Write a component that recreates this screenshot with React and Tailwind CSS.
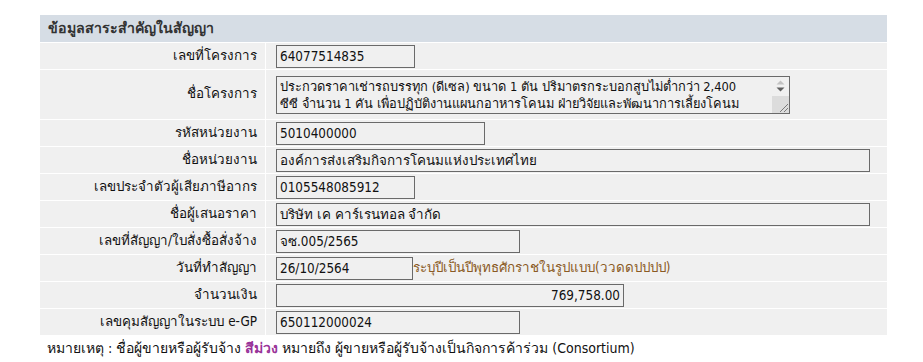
import React from 'react';

const rows = [
  { label: 'เลขที่โครงการ', value: '64077514835', w: 'w-[139px]' },
  { label: 'ชื่อโครงการ', textarea: true },
  { label: 'รหัสหน่วยงาน', value: '5010400000', w: 'w-[209px]' },
  { label: 'ชื่อหน่วยงาน', value: 'องค์การส่งเสริมกิจการโคนมแห่งประเทศไทย', w: 'w-[594px]' },
  { label: 'เลขประจำตัวผู้เสียภาษีอากร', value: '0105548085912', w: 'w-[139px]' },
  { label: 'ชื่อผู้เสนอราคา', value: 'บริษัท เค คาร์เรนทอล จำกัด', w: 'w-[594px]' },
  { label: 'เลขที่สัญญา/ใบสั่งซื้อสั่งจ้าง', value: 'จซ.005/2565', w: 'w-[244px]' },
  { label: 'วันที่ทำสัญญา', value: '26/10/2564', w: 'w-[137px]', hint: 'ระบุปีเป็นปีพุทธศักราชในรูปแบบ(ววดดปปปป)' },
  { label: 'จำนวนเงิน', value: '769,758.00', w: 'w-[348px]', right: true },
  { label: 'เลขคุมสัญญาในระบบ e-GP', value: '650112000024', w: 'w-[244px]' },
];

const Field = ({ row }) => (
  <div className="flex items-center">
    <div
      className={`${row.w} h-[23px] border border-[#6a6a6a] bg-[#f0f0f0] px-[3px] leading-[21px] whitespace-nowrap overflow-hidden ${
        row.right ? 'text-right' : 'text-left'
      }`}
    >
      {row.value}
    </div>
    {row.hint && <span className="text-[#8a5a24]">{row.hint}</span>}
  </div>
);

// textarea with a drawn classic scrollbar on the right
const ProjectName = () => (
  <div className="w-[514px] h-[38px] border border-[#6a6a6a] bg-[#f0f0f0] flex">
    <div className="flex-1 px-[3px] pt-px text-[12.8px] leading-[17px] overflow-hidden whitespace-nowrap">
      ประกวดราคาเช่ารถบรรทุก (ดีเซล) ขนาด 1 ตัน ปริมาตรกระบอกสูบไม่ต่ำกว่า 2,400
      <br />
      ซีซี จำนวน 1 คัน เพื่อปฏิบัติงานแผนกอาหารโคนม ฝ่ายวิจัยและพัฒนาการเลี้ยงโคนม
    </div>
    <div className="w-[17px] flex flex-col">
      <div className="h-[19px] flex flex-col items-center justify-center gap-[2px]">
        <svg width="9" height="5" viewBox="0 0 9 5">
          <path d="M0.5 4.5 L4.5 0.5 L8.5 4.5 Z" fill="#c2c2c2" />
        </svg>
        <svg width="9" height="5" viewBox="0 0 9 5">
          <path d="M0.5 0.5 L4.5 4.5 L8.5 0.5 Z" fill="#606060" />
        </svg>
      </div>
      <div className="flex-1 bg-[#dcdcdc] flex items-end justify-end">
        <svg width="12" height="12" viewBox="0 0 12 12">
          <path d="M11 3 L3 11 M11 7 L7 11" stroke="#7a7a7a" strokeWidth="1" />
        </svg>
      </div>
    </div>
  </div>
);

const App = () => {
  return (
    <div
      className="w-[923px] h-[362px] bg-white text-[13.4px] text-[#111] font-stretch-condensed"
      style={{ fontFamily: '"DejaVu Sans Condensed", "DejaVu Sans", sans-serif' }}
    >
      <div className="pl-[40px] pt-[15px]">
        <div className="w-[847px] flex flex-col gap-px bg-white">
          <div className="h-[27px] bg-[#d6dde5] pl-[8px] flex items-center text-[14.2px] font-bold text-[#333]">
            ข้อมูลสาระสำคัญในสัญญา
          </div>

          {rows.map((row) => (
            <div key={row.label} className="flex gap-px">
              <div
                className={`w-[225px] bg-[#f0f0f0] flex items-center justify-end pr-[8px] ${
                  row.textarea ? 'h-[49px]' : 'h-[26px]'
                }`}
              >
                {row.label}
              </div>
              <div className="flex-1 bg-[#f0f0f0] flex items-center pl-[10px]">
                {row.textarea ? <ProjectName /> : <Field row={row} />}
              </div>
            </div>
          ))}
        </div>

        <div className="pl-[7px] pt-[4px] text-[14px] leading-[18px]">
          หมายเหตุ : ชื่อผู้ขายหรือผู้รับจ้าง <span className="text-[#993399] font-bold">สีม่วง</span> หมายถึง
          ผู้ขายหรือผู้รับจ้างเป็นกิจการค้าร่วม (Consortium)
        </div>
      </div>
    </div>
  );
};

export default App;
